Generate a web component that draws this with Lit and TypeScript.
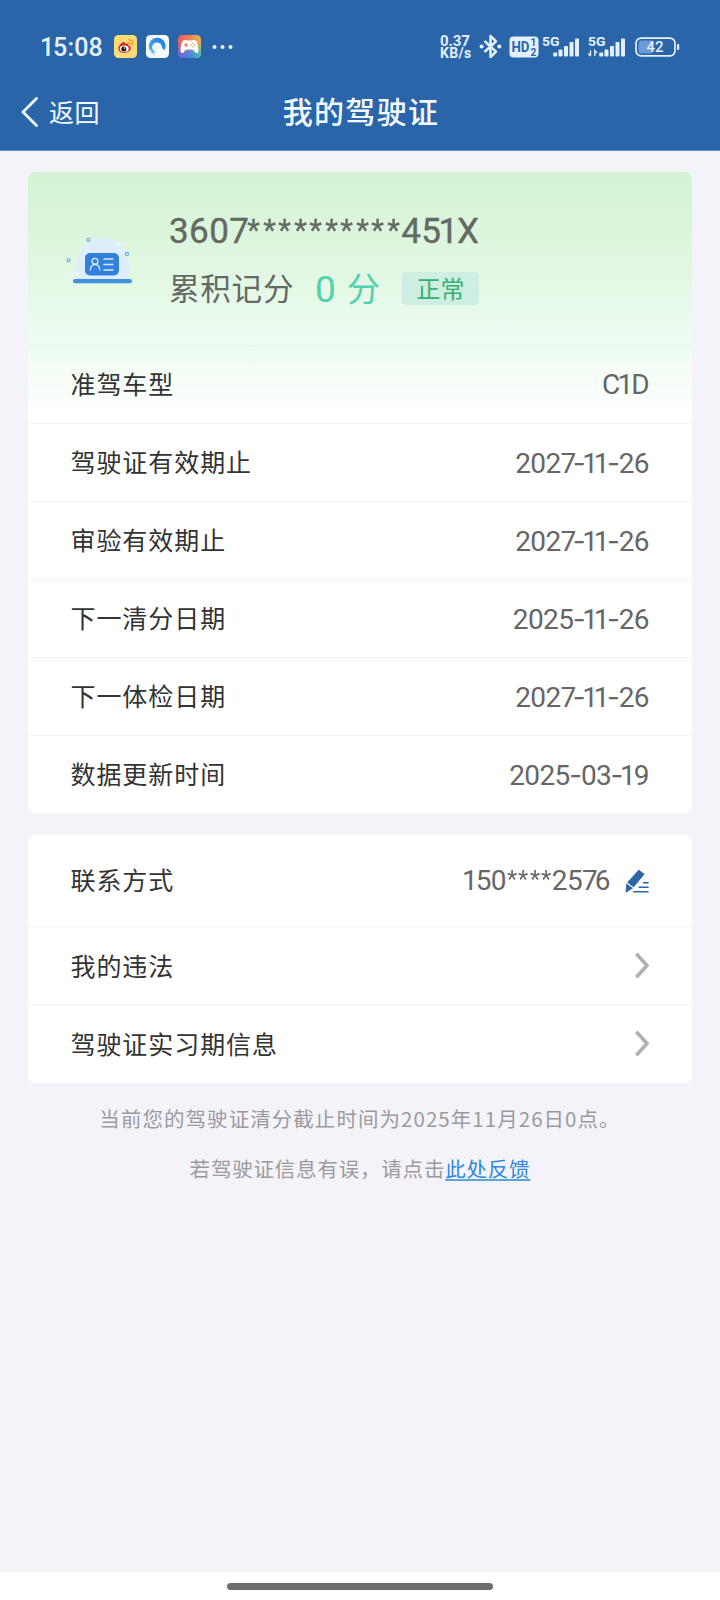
import { LitElement, html, svg, css } from "lit";
import { customElement, property } from "lit/decorators.js";

/** Figures with proportional "1" and wide dashes. */
@customElement("fig-text")
class FigText extends LitElement {
  static styles = css`
    :host { display: inline-block; white-space: pre; font-family: Roboto, "Noto Sans CJK SC", sans-serif; }
    .one { margin-left: -0.08em; margin-right: -0.05em; }
    .seven { margin-right: -0.085em; }
    .dash { font-family: Inter, sans-serif; margin: 0 -0.02em; }
    .star { display: inline-block; transform: scale(.84); transform-origin: 50% 30%; }
  `;
  @property() value = "";
  render() {
    return [...this.value].map((c) =>
      c === "1" ? html`<span class="one">1</span>`
      : c === "7" ? html`<span class="seven">7</span>`
      : c === "-" ? html`<span class="dash">-</span>`
      : c === "*" ? html`<span class="star">*</span>`
      : c);
  }
}

const signal = (roaming: boolean) => html`
  <svg class="signal" width="40" height="26" viewBox="0 0 40 26">
    <text x="0" y="12" font-size="13.500" font-weight="700" textLength="17.500" lengthAdjust="spacingAndGlyphs" fill="#e4f0fd">5G</text>
    ${[[11.2, 4], [16.5, 7], [22, 10.5], [27.5, 14.5], [33, 18]].map(([x, h]) => svg`<rect x=${x} y=${22.5 - h} width="4" height=${h} rx="1" fill="#e4f0fd"/>`)}
    ${roaming ? svg`<path d="M2.500 16.500v5M0 19.500l2.500 2.500M6.800 22v-5.500l2.200 2.600" stroke="#e4f0fd" stroke-width="1.400" fill="none"/>` : ""}
  </svg>`;

const chevron = html`<svg class="chev" width="16" height="29" viewBox="0 0 16 29"><path d="M3.300 1.800 14 13.500 3.300 25.200" fill="none" stroke="#b0b0b0" stroke-width="3.600"/></svg>`;

const pencil = html`<svg class="pencil" width="24" height="24" viewBox="0 0 24 24">
  <path d="M13.800 1.200 19 5.200 8.600 17.800 2.800 13.400Z" fill="#2b65a8" stroke="#2b65a8" stroke-linejoin="round"/>
  <path d="M1.600 15 7.400 19.200 1 23.200Z" fill="#2b65a8" stroke="#2b65a8" stroke-width=".8" stroke-linejoin="round"/>
  <path d="M18 13.800h5.600M13.600 18.300h10M8.200 22.700h15.400" stroke="#2b65a8" stroke-width="1.500"/>
</svg>`;

@customElement("app-root")
class AppRoot extends LitElement {
  static styles = css`
    :host { display: block; font-family: "Noto Sans CJK SC", sans-serif; }
    .page { display: flex; flex-direction: column; height: 1600px; width: 720px; background: #f4f3f9; overflow: hidden; }
    .top { background: #2b65a9; height: 151px; flex: none; box-sizing: border-box; border-bottom: 1px solid #6f93c2; color: #f2faff; }
    .status { display: flex; height: 93px; align-items: center; padding: 0 40px 0 42px; box-sizing: border-box; }
    .time { font-size: 25px; font-weight: 500; letter-spacing: .15px; color: #e4f0fd; width: 72px; line-height: 30px; padding-top: 2px; }
    .apps { display: flex; gap: 9px; }
    .dots { margin-left: 10px; }
    .right { margin-left: auto; display: flex; align-items: center; }
    .rate { font-family: Roboto, sans-serif; font-weight: 700; font-size: 14px; line-height: 12px; color: #e4f0fd; width: 39px; white-space: nowrap; }
    .rate-num { font-size: 15px; letter-spacing: -.1px; display: block; }
    .rate-unit { display: block; letter-spacing: .35px; }
    svg { display: block; flex: none; font-family: Roboto, sans-serif; }
    .hd { margin-left: 7px; }
    .s1 { margin-left: 3px; }
    .s2 { margin-left: 6px; }
    .bat { margin-left: 7px; }
    .nav { display: grid; grid-template-columns: 200px 1fr 200px; align-items: center; height: 38px; }
    .back { display: flex; align-items: center; padding-left: 20px; gap: 11px; font-size: 25px; letter-spacing: .4px; line-height: 34px; }
    .back-text { padding-bottom: 3px; }
    .title { text-align: center; font-size: 30px; letter-spacing: 1.3px; font-weight: 500; line-height: 34px; padding: 0 0 4px 2px; }
    .content { flex: 1; padding: 21px 28px 0; }
    .card { background: #fff; border-radius: 7px; overflow: hidden; }
    .license { background: linear-gradient(#d3f4d4 0, #e0f7e1 90px, #ecfbef 160px, #f1fdf3 190px, #fff 245px); height: 641px; }
    .more { margin-top: 22px; height: 248px; }
    .summary { display: flex; height: 173px; box-sizing: border-box; padding: 38px 0 0 36px; }
    .art { margin-top: 19px; }
    .info { margin-left: 25px; color: #646964; }
    .idno { display: block; font-size: 35px; line-height: 44px; -webkit-text-stroke: .4px #646964; letter-spacing: .4px; }
    .score { display: flex; align-items: center; height: 34px; margin-top: 17px; }
    .score-label { font-size: 30.5px; letter-spacing: .8px; line-height: 34px; width: 146px; padding-bottom: 2px; }
    .score-num { color: #52d1ae; font-size: 33px; line-height: 34px; width: 87px; white-space: pre; display: flex; align-items: center; }
    .zero { font-size: 37px; width: 32px; padding-top: 3px; }
    .fen { padding-bottom: 2px; }
    .tag { width: 77px; height: 33px; background: #cdeee0; color: #38b075; font-size: 24px; line-height: 31px; text-align: center; border-radius: 4px; }
    .row { display: flex; justify-content: space-between; align-items: center; height: 78px; box-sizing: border-box; border-top: 1px solid rgba(0,0,40,.05); padding: 0 43px 0 42.500px; }
    .label { font-size: 25px; letter-spacing: .93px; color: #333; line-height: 36px; padding-bottom: 3px; }
    .value { font-size: 28px; color: #666; letter-spacing: -.6px; line-height: 36px; padding-top: 1px; }
    .more .row { border-top: 2px solid #f8f8fa; }
    .more .contact { height: 91px; border-top: 0; }
    .contact-value { display: flex; align-items: center; gap: 15px; }
    .note { text-align: center; font-size: 20.5px; letter-spacing: 1.05px; color: #9b9b9e; line-height: 30px; margin-top: 20px; }
    .note2 { margin-top: 20px; letter-spacing: .8px; }
    .link { color: #2f87dd; text-decoration: underline; text-underline-offset: 2px; text-decoration-thickness: 2px; text-decoration-color: #5ba5d6; }
    .home { background: #fff; height: 28px; flex: none; display: flex; justify-content: center; padding-top: 11px; box-sizing: border-box; }
    .pill { width: 266px; height: 7px; border-radius: 4px; background: #6c6d6c; }
  `;
  render() {
    const rows = [
      ["准驾车型", "C1D"], ["驾驶证有效期止", "2027-11-26"], ["审验有效期止", "2027-11-26"],
      ["下一清分日期", "2025-11-26"], ["下一体检日期", "2027-11-26"], ["数据更新时间", "2025-03-19"],
    ];
    return html`<div class="page">
      <header class="top">
        <div class="status">
          <fig-text class="time" value="15:08"></fig-text>
          <div class="apps">
            <svg width="23" height="23" viewBox="0 0 23 23">
              <rect width="23" height="23" rx="4.500" fill="#fbdd77"/>
              <path d="M4.300 13.500c0-3 3.700-6.500 5.700-6.500 1.300 0 1 1.700.8 2.100 2-.8 3.900-.6 3.500 1.300 1.600.5 2.600 1.300 2.500 2.900-.2 2.900-3.500 4.600-6.700 4.500-3.200 0-5.800-1.500-5.800-4.300z" fill="#d8251f"/>
              <ellipse cx="10.200" cy="13.700" rx="4.500" ry="3.200" fill="#fff"/><circle cx="9.800" cy="13.900" r="2.500" fill="#151515"/><circle cx="10.600" cy="13" r=".8" fill="#fff"/>
              <path d="M14.200 5c3-.6 5.200 1.700 4.600 4.900M14.300 7.700c1.500-.3 2.500.7 2.200 2.200" fill="none" stroke="#f09a2a" stroke-width="1.300" stroke-linecap="round"/>
            </svg>
            <svg width="23" height="23" viewBox="0 0 23 23">
              <defs><linearGradient id="q" x1="0" y1="1" x2="1" y2="0"><stop offset="0" stop-color="#48bdf5"/><stop offset="1" stop-color="#1b72df"/></linearGradient></defs>
              <rect width="23" height="23" rx="4.500" fill="#f4f9fe"/>
              <circle cx="11.200" cy="11.200" r="8.400" fill="url(#q)"/>
              <circle cx="11" cy="12.300" r="4.900" fill="#eaf5fe"/>
              <path d="M8 18.500c.5-3 3-4 4.600-3.300 1-3 5.300-2.500 5.500.2 3-.2 3.500 4.600.3 4.600h-8c-2 0-2.800-.3-2.400-1.500z" fill="#fff"/>
              <path d="M3.500 14.500c1.200 3.300 3.500 4.800 6 5" stroke="#bfe5fa" stroke-width="2" fill="none"/>
            </svg>
            <svg width="23" height="23" viewBox="0 0 23 23">
              <defs><linearGradient id="g1" x1="0" y1="0" x2="1" y2="0"><stop offset="0" stop-color="#e9605c"/><stop offset=".5" stop-color="#f28252"/><stop offset="1" stop-color="#e6b552"/></linearGradient>
              <linearGradient id="g2" x1="0" y1="0" x2="1" y2="0"><stop offset="0" stop-color="#7a5fd0"/><stop offset=".5" stop-color="#3f86e8"/><stop offset="1" stop-color="#47c0b0"/></linearGradient>
              <linearGradient id="g3" x1="0" y1="0" x2="0" y2="1"><stop offset=".3" stop-color="#fff" stop-opacity="0"/><stop offset=".85" stop-color="#fff"/></linearGradient>
              <mask id="m"><rect width="23" height="23" fill="url(#g3)"/></mask></defs>
              <rect width="23" height="23" rx="4.500" fill="url(#g1)"/><rect width="23" height="23" rx="4.500" fill="url(#g2)" mask="url(#m)"/>
              <path d="M5.800 5.300c2-.7 3 .3 5.700.3s3.700-1 5.700-.3c2.300.8 3.700 8.500 3 11.400-.5 1.800-2.300 1.700-3.200.2-1-1.800-1.600-2.500-5.500-2.500s-4.500.7-5.500 2.500c-.9 1.500-2.700 1.600-3.200-.2-.7-2.900.7-10.600 3-11.400z" fill="#fff"/>
              <path d="M8 8v4M6 10h4" stroke="#ec6a5c" stroke-width="1.200"/>
              <g fill="#eda052"><circle cx="15" cy="8.200" r=".8"/><circle cx="15" cy="11.800" r=".8"/><circle cx="13.200" cy="10" r=".8"/><circle cx="16.800" cy="10" r=".8"/></g>
            </svg>
          </div>
          <svg class="dots" width="24" height="6" viewBox="0 0 24 6" fill="#e4f0fd"><circle cx="3.500" cy="3" r="2"/><circle cx="11.500" cy="3" r="2"/><circle cx="19.500" cy="3" r="2"/></svg>
          <div class="right">
            <div class="rate"><span class="rate-num">0.37</span><span class="rate-unit">KB/s</span></div>
            <svg width="23" height="26" viewBox="0 0 23 26"><path d="M5.500 7 17 17.700 11.500 23V2l5.500 5.300L5.500 18" fill="none" stroke="#e4f0fd" stroke-width="2.500" stroke-linejoin="round"/><circle cx="2.600" cy="12.500" r="2" fill="#e4f0fd"/><circle cx="20.300" cy="12.500" r="2" fill="#e4f0fd"/></svg>
            <svg class="hd" width="30" height="22" viewBox="0 0 30 22"><rect x=".5" y=".5" width="29" height="21" rx="4" fill="#e4f0fd"/><g fill="#2b65a9" font-weight="700"><text x="2.500" y="15.700" font-size="14" textLength="18" lengthAdjust="spacingAndGlyphs">HD</text><text x="21.500" y="10" font-size="10">1</text><text x="21.500" y="20" font-size="10">2</text></g></svg>
            <div class="s1">${signal(false)}</div>
            <div class="s2">${signal(true)}</div>
            <svg class="bat" width="45" height="20" viewBox="0 0 45 20"><rect x="1" y="1.200" width="39" height="17.600" rx="5" fill="none" stroke="#e4f0fd" stroke-width="1.700"/><path d="M6.500 3.500h10.500v13H6.500a3 3 0 0 1-3-3v-7a3 3 0 0 1 3-3z" fill="#6b9bd6"/><rect x="42" y="7" width="2.200" height="6" rx="1" fill="#e4f0fd"/><text x="20" y="15.200" font-size="15" font-weight="500" text-anchor="middle" fill="#e4f0fd">42</text></svg>
          </div>
        </div>
        <div class="nav">
          <div class="back"><svg width="18" height="30" viewBox="0 0 18 30"><path d="M16.500 1.500 3 15 16.500 28.500" fill="none" stroke="#f2faff" stroke-width="2.800" stroke-linecap="round" stroke-linejoin="round"/></svg><span class="back-text">返回</span></div>
          <div class="title">我的驾驶证</div>
        </div>
      </header>
      <main class="content">
        <section class="card license">
          <div class="summary">
            <svg class="art" width="80" height="58" viewBox="0 0 80 58">
              <path d="M12 50C10 31 18 8.500 40 8.500c17 0 25 15 25 29 0 5-1 9-2.500 12.500z" fill="#dfeefc"/>
              <path d="M48 13c5-.5 10 1 20 1-5 2-10 2-15 1.600zM0 45c5-1 10-2 15-2v4c-6-.5-10-1-15-2z" fill="#e8f7f2"/>
              <rect x="9" y="50" width="59" height="4.200" rx="2" fill="#4390dc"/>
              <rect x="21" y="24" width="34" height="22.500" rx="5" fill="#3180dc"/>
              <g fill="none" stroke="#dcebfb" stroke-width="1.300"><circle cx="31" cy="32.300" r="2.900"/><path d="M26.300 41.500c.3-8 9.200-8 9.500 0M39.500 30h10M39.500 35.500h10M39.500 41h10"/></g>
              <g fill="#d6effa" stroke="#68acd2" stroke-width="1.100"><circle cx="24.500" cy="10.800" r="1.600"/><circle cx="63" cy="25" r="1.600"/><circle cx="4.500" cy="31.300" r="1.600"/></g>
            </svg>
            <div class="info">
              <fig-text class="idno" value="3607**********451X"></fig-text>
              <div class="score">
                <span class="score-label">累积记分</span>
                <span class="score-num"><fig-text class="zero" value="0"></fig-text><span class="fen">分</span></span>
                <span class="tag">正常</span>
              </div>
            </div>
          </div>
          ${rows.map(([l, v]) => html`<div class="row"><span class="label">${l}</span><fig-text class="value" .value=${v}></fig-text></div>`)}
        </section>
        <section class="card more">
          <div class="row contact"><span class="label">联系方式</span><span class="contact-value"><fig-text class="value" value="150****2576"></fig-text>${pencil}</span></div>
          <div class="row"><span class="label">我的违法</span>${chevron}</div>
          <div class="row"><span class="label">驾驶证实习期信息</span>${chevron}</div>
        </section>
        <div class="note">当前您的驾驶证清分截止时间为2025年11月26日0点。</div>
        <div class="note note2">若驾驶证信息有误，请点击<span class="link">此处反馈</span></div>
      </main>
      <footer class="home"><div class="pill"></div></footer>
    </div>`;
  }
}
